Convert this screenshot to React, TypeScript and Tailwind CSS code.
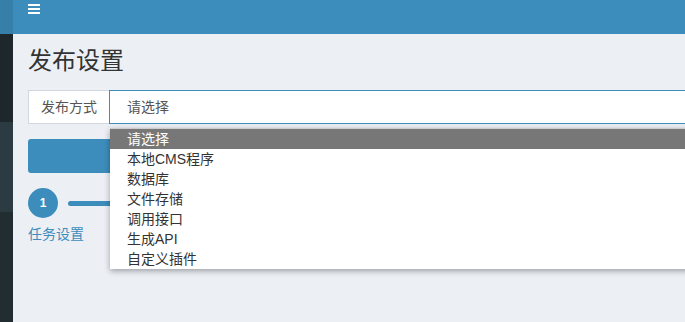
const options = ["请选择", "本地CMS程序", "数据库", "文件存储", "调用接口", "生成API", "自定义插件"];

export default function App() {
  return (
    <div
      className="flex h-[322px] w-[685px] overflow-hidden bg-[#ecf0f5] text-[#333]"
      style={{ fontFamily: '"Liberation Sans", "Noto Sans CJK SC", sans-serif' }}
    >
      {/* sidebar strip */}
      <div className="flex w-[13px] shrink-0 flex-col">
        <div className="h-[34px] bg-[#367fa9]" />
        <div className="h-[88px] bg-[#1e282c]" />
        <div className="h-[90px] bg-[#2c3b41]" />
        <div className="flex-1 bg-[#222d32]" />
      </div>

      <div className="relative flex min-w-0 flex-1 flex-col">
        <header className="flex h-[34px] shrink-0 items-start bg-[#3c8dbc] pl-[15px] pt-[4px]">
          <svg width="12" height="10" viewBox="0 0 12 10" fill="#fff">
            <rect x="0" y="0" width="12" height="2" />
            <rect x="0" y="4" width="12" height="2" />
            <rect x="0" y="8" width="12" height="2" />
          </svg>
        </header>

        <main className="relative flex-1 pl-[15px] pt-[11px]">
          <h1 className="text-[24px] leading-[32px] font-normal text-[#333]">发布设置</h1>

          <div className="mt-[13px] mr-[-20px] flex h-[34px]">
            <span className="flex w-[81px] shrink-0 items-center border border-r-0 border-[#d2d6de] bg-white pl-[12px] text-[14px] text-[#555]">
              发布方式
            </span>
            <div className="flex flex-1 items-center border border-[#3c8dbc] bg-white pl-[17px] text-[14px] text-[#555]">
              请选择
            </div>
          </div>

          <div className="mt-[15px] mr-[-20px] h-[34px] rounded-[3px] bg-[#3c8dbc]" />

          <div className="mt-[15px] flex items-center">
            <div className="flex h-[30px] w-[30px] shrink-0 items-center justify-center rounded-full bg-[#3c8dbc] text-[12px] font-bold text-white">
              1
            </div>
            <div className="ml-[10px] h-[5px] flex-1 rounded-full bg-[#3c8dbc]" />
          </div>
          <a className="mt-[8px] block text-[14px] leading-[16px] text-[#3c8dbc]">任务设置</a>

          {/* open native select list */}
          <ul className="absolute left-[97px] top-[94px] w-[600px] border-t border-[#ccc] bg-white text-[14px] text-[#333] shadow-[0_2px_6px_rgba(0,0,0,0.35)]">
            {options.map((o, i) => (
              <li
                key={o}
                className={`h-[20px] pl-[17px] leading-[20px] ${i === 0 ? "bg-[#777] text-white" : ""}`}
              >
                {o}
              </li>
            ))}
          </ul>
        </main>
      </div>
    </div>
  );
}
